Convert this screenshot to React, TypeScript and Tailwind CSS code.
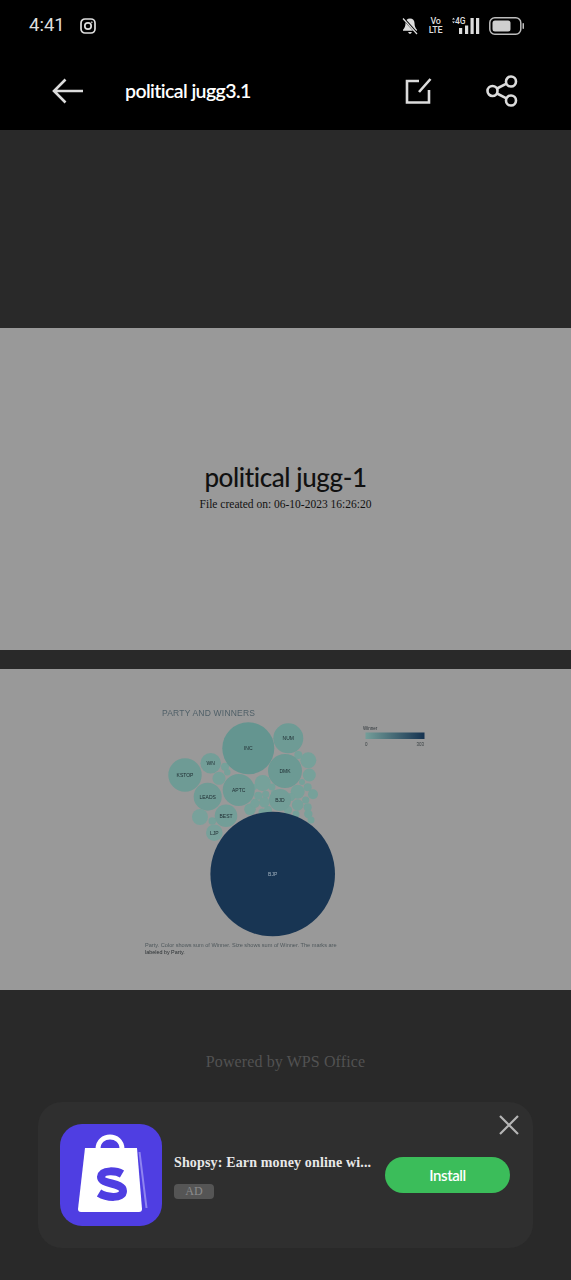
const small: [number, number, number][] = [
  [262.7, 783, 8], [219, 778.3, 6.5], [308.3, 760.3, 8], [309.3, 775, 6.5], [298.3, 755, 4],
  [225, 766.7, 4], [227.3, 772.3, 3.2], [297.7, 791.7, 7], [307.7, 787.3, 4], [313, 794.3, 5],
  [305.7, 800, 3.6], [297.7, 805, 5.8], [307.7, 807.3, 4], [308.3, 814, 4.2], [311, 820, 3.5],
  [250, 809.3, 5.8], [255, 803.3, 4.6], [264.3, 802.3, 5.2], [258.3, 795.7, 4], [265.7, 794.3, 3.6],
  [212.3, 821, 3.8], [268, 810, 4], [262, 812, 3.5], [291, 797, 4], [272, 787, 3.5],
  [288, 810, 4], [296, 814, 3.5], [274, 793, 3], [254, 787, 3], [302, 782, 3],
]

const labeled: [number, number, number, string, string][] = [
  [248.3, 748.3, 26, '#649590', 'INC'],
  [288.3, 738.3, 15, '#6e9b95', 'NUM'],
  [185, 775, 16.7, '#6e9b95', 'KSTOP'],
  [210.7, 763.3, 10.3, '#739e98', 'WN'],
  [285, 771, 17, '#6c9a94', 'DMK'],
  [238.7, 790, 16, '#6e9b95', 'APTC'],
  [207.7, 796.7, 14, '#709c96', 'LEADS'],
  [280, 800, 11, '#739e98', 'BJD'],
  [226, 815.7, 11.3, '#739e98', 'BEST'],
  [200, 817, 8, '#78a19b', ''],
  [214.3, 832.7, 8.3, '#78a19b', 'LJP'],
]

const BubbleChart = () => {
  return (
    <svg viewBox="0 669 571 321" className="h-full w-full blur-[0.5px]" style={{ fontFamily: '"Liberation Sans", sans-serif' }}>
      <text x="162" y="716" fontSize="8.5" fill="#4f5f67" letterSpacing="0.2">PARTY AND WINNERS</text>
      {small.map(([cx, cy, r], i) => (
        <circle key={i} cx={cx} cy={cy} r={r} fill="#76a19a" />
      ))}
      {labeled.map(([cx, cy, r, fill, label]) => (
        <g key={`${cx}-${cy}`}>
          <circle cx={cx} cy={cy} r={r} fill={fill} />
          {label && (
            <text x={cx} y={cy + 2} fontSize="5" fill="#1d2b30" textAnchor="middle">{label}</text>
          )}
        </g>
      ))}
      <circle cx="272.7" cy="874" r="62.3" fill="#183553" />
      <text x="272.7" y="876" fontSize="5" fill="#9fb0bd" textAnchor="middle">BJP</text>
      <text x="363" y="729.5" fontSize="4.5" fill="#2c3338">Winner</text>
      <defs>
        <linearGradient id="legend" x1="0" x2="1" y1="0" y2="0">
          <stop offset="0" stopColor="#749e99" />
          <stop offset="1" stopColor="#153250" />
        </linearGradient>
      </defs>
      <rect x="365.5" y="732.5" width="59" height="6.5" fill="url(#legend)" />
      <text x="365" y="745.5" fontSize="4.5" fill="#3a4144">0</text>
      <text x="424" y="745.5" fontSize="4.5" fill="#3a4144" textAnchor="end">303</text>
      <text x="145" y="946.5" fontSize="5.6" fill="#4f585c">Party. Color shows sum of Winner. Size shows sum of Winner. The marks are</text>
      <text x="145" y="953.5" fontSize="5.4" fill="#2b3033">labeled by Party.</text>
    </svg>
  )
}

const StatusBar = () => {
  return (
    <div className="flex h-[52px] items-center pl-[29px] pr-[46px] text-[#dedede]">
      <span className="text-[18.5px]" style={{ fontFamily: 'Roboto, sans-serif' }}>4:41</span>
      <svg viewBox="0 0 16 16" className="ml-[15px] h-4 w-4" fill="none" stroke="currentColor" strokeWidth="1.7">
        <rect x="1" y="1" width="14" height="14" rx="4" />
        <circle cx="8" cy="8" r="3.2" />
        <circle cx="11.8" cy="4.2" r="0.5" fill="currentColor" strokeWidth="0.6" />
      </svg>
      <div className="ml-auto flex items-center">
        <svg viewBox="0 0 16 18" className="h-[18px] w-4" fill="currentColor">
          <path d="M8 1.5c-2.8 0-4.5 2-4.5 4.600 0 3.500-1 5-2.500 6.600v1h14v-1c-1.500-1.600-2.500-3.100-2.500-6.600C12.500 3.500 10.800 1.500 8 1.500zM6.200 15c.2 1 .9 1.800 1.800 1.800s1.600-.8 1.800-1.800z" />
          <path d="M1.500 1.500l13.500 15" stroke="#000" strokeWidth="2.600" />
          <path d="M1 1.500l14 15.500" stroke="currentColor" strokeWidth="1.200" />
        </svg>
        <div className="ml-[12px] flex w-[11px] flex-col items-center text-[9px] font-medium leading-[9px] tracking-[-0.3px]" style={{ fontFamily: 'Roboto, sans-serif' }}>
          <span>Vo</span>
          <span>LTE</span>
        </div>
        <svg viewBox="0 0 30 20" className="ml-[9px] h-5 w-[30px]" fill="currentColor">
          <text x="5" y="8" fontSize="8.500" fontWeight="500" fontFamily="Roboto, sans-serif">4G</text>
          <path d="M2 3.500l1.500-1.800L5 3.500zM2 5.500l1.500 1.800L5 5.500z" />
          <rect x="9" y="12" width="3.200" height="6" />
          <rect x="15" y="9.500" width="3.200" height="8.500" />
          <rect x="20.500" y="2" width="3.200" height="16" />
          <rect x="26" y="2" width="3.200" height="16" />
        </svg>
        <svg viewBox="0 0 36 18" className="ml-[9px] h-[18px] w-9" fill="none">
          <rect x="0.800" y="0.800" width="31" height="16.400" rx="5" stroke="#bdbdbd" strokeWidth="1.500" />
          <rect x="3.500" y="3.500" width="18" height="11" rx="2.500" fill="#cfcfcf" />
          <rect x="33.500" y="6" width="1.500" height="6" rx="0.700" fill="#bdbdbd" />
        </svg>
      </div>
    </div>
  )
}

const Toolbar = () => {
  return (
    <div className="flex h-[78px] items-center pl-[52px] pr-[53px] text-[#dcdcdc]">
      <svg viewBox="0 0 32 26" className="h-[26px] w-8" fill="none" stroke="currentColor" strokeWidth="2.600">
        <path d="M31 13H2M13.500 1.500L2 13l11.500 11.500" />
      </svg>
      <span className="ml-[41px] text-[19.500px] font-semibold tracking-[-0.6px] text-white" style={{ fontFamily: 'Lato, sans-serif' }}>
        political jugg3.1
      </span>
      <svg viewBox="0 0 27 26" className="ml-auto h-[26px] w-[27px]" fill="none" stroke="currentColor" strokeWidth="2.600">
        <path d="M14 3H2v21.500h22V12M14 14L25.500 1" />
      </svg>
      <svg viewBox="0 0 32 32" className="ml-[54px] h-8 w-8" fill="none" stroke="currentColor" strokeWidth="2.600">
        <circle cx="6.500" cy="16" r="5" />
        <circle cx="25" cy="6.500" r="5" />
        <circle cx="25" cy="25.500" r="5" />
        <path d="M11 13.500l9.500-4.800M11 18.500l9.500 4.800" />
      </svg>
    </div>
  )
}

const AdCard = () => {
  return (
    <div className="absolute left-[38px] top-[1102px] flex h-[146px] w-[495px] items-center rounded-[24px] bg-[#2f2f2f] pl-[22px] pr-[23px]">
      <div className="h-[102px] w-[102px] shrink-0 rounded-[22px] bg-[#4f3ee2]">
        <svg viewBox="0 0 102 102" className="h-full w-full">
          <path d="M38 25c0-16 24-16 24 0" fill="none" stroke="#fff" strokeWidth="5" />
          <path d="M25 24h52l5 61a3 3 0 0 1-3 3H21a3 3 0 0 1-3-3z" fill="#fff" />
          <path d="M79.500 28l7 56" stroke="#8f84f0" strokeWidth="2" />
          <path d="M62 50c-5-3-20-5-21 3 0 8 22 5 22 14 0 8-16 7-24 2" fill="none" stroke="#4f3ee2" strokeWidth="8" />
        </svg>
      </div>
      <div className="ml-3 flex w-[199px] shrink-0 flex-col" style={{ fontFamily: '"Liberation Serif", serif' }}>
        <span className="whitespace-nowrap text-[14px] font-bold tracking-[0.15px] text-[#e8e8e8]">Shopsy: Earn money online wi...</span>
        <span className="mt-[11px] flex h-[15px] w-10 items-center justify-center rounded-[4px] bg-[#555555] text-[12px] text-[#8c8c8c]">AD</span>
      </div>
      <button className="ml-auto flex h-9 w-[125px] items-center justify-center rounded-full bg-[#3bbd5a] text-[15px] font-semibold tracking-[-0.4px] text-white" style={{ fontFamily: 'Lato, sans-serif' }}>
        Install
      </button>
      <svg viewBox="0 0 20 20" className="absolute right-[14px] top-[13px] h-5 w-5" fill="none" stroke="#b5b5b5" strokeWidth="2.200">
        <path d="M1 1l18 18M19 1L1 19" />
      </svg>
    </div>
  )
}

export default function App() {
  return (
    <div className="relative h-[1280px] w-[571px] overflow-hidden bg-[#292929]">
      <div className="h-[130px] bg-black">
        <StatusBar />
        <Toolbar />
      </div>
      <div className="pt-[198px]">
        <div className="flex h-[322px] flex-col items-center bg-[#999999] pt-[130px] text-[#111111]">
          <h1 className="text-[26px] font-medium leading-[38px] tracking-[-0.4px]" style={{ fontFamily: 'Lato, sans-serif' }}>political jugg-1</h1>
          <p className="mt-[1px] text-[11.500px] leading-[15px]" style={{ fontFamily: '"Liberation Serif", serif' }}>File created on: 06-10-2023 16:26:20</p>
        </div>
        <div className="mt-[19px] h-[321px] bg-[#999999]">
          <BubbleChart />
        </div>
        <p className="mt-[62px] text-center text-[16px] leading-5 tracking-[0.1px] text-[#525252]" style={{ fontFamily: '"Liberation Serif", serif' }}>
          Powered by WPS Office
        </p>
      </div>
      <AdCard />
    </div>
  )
}
